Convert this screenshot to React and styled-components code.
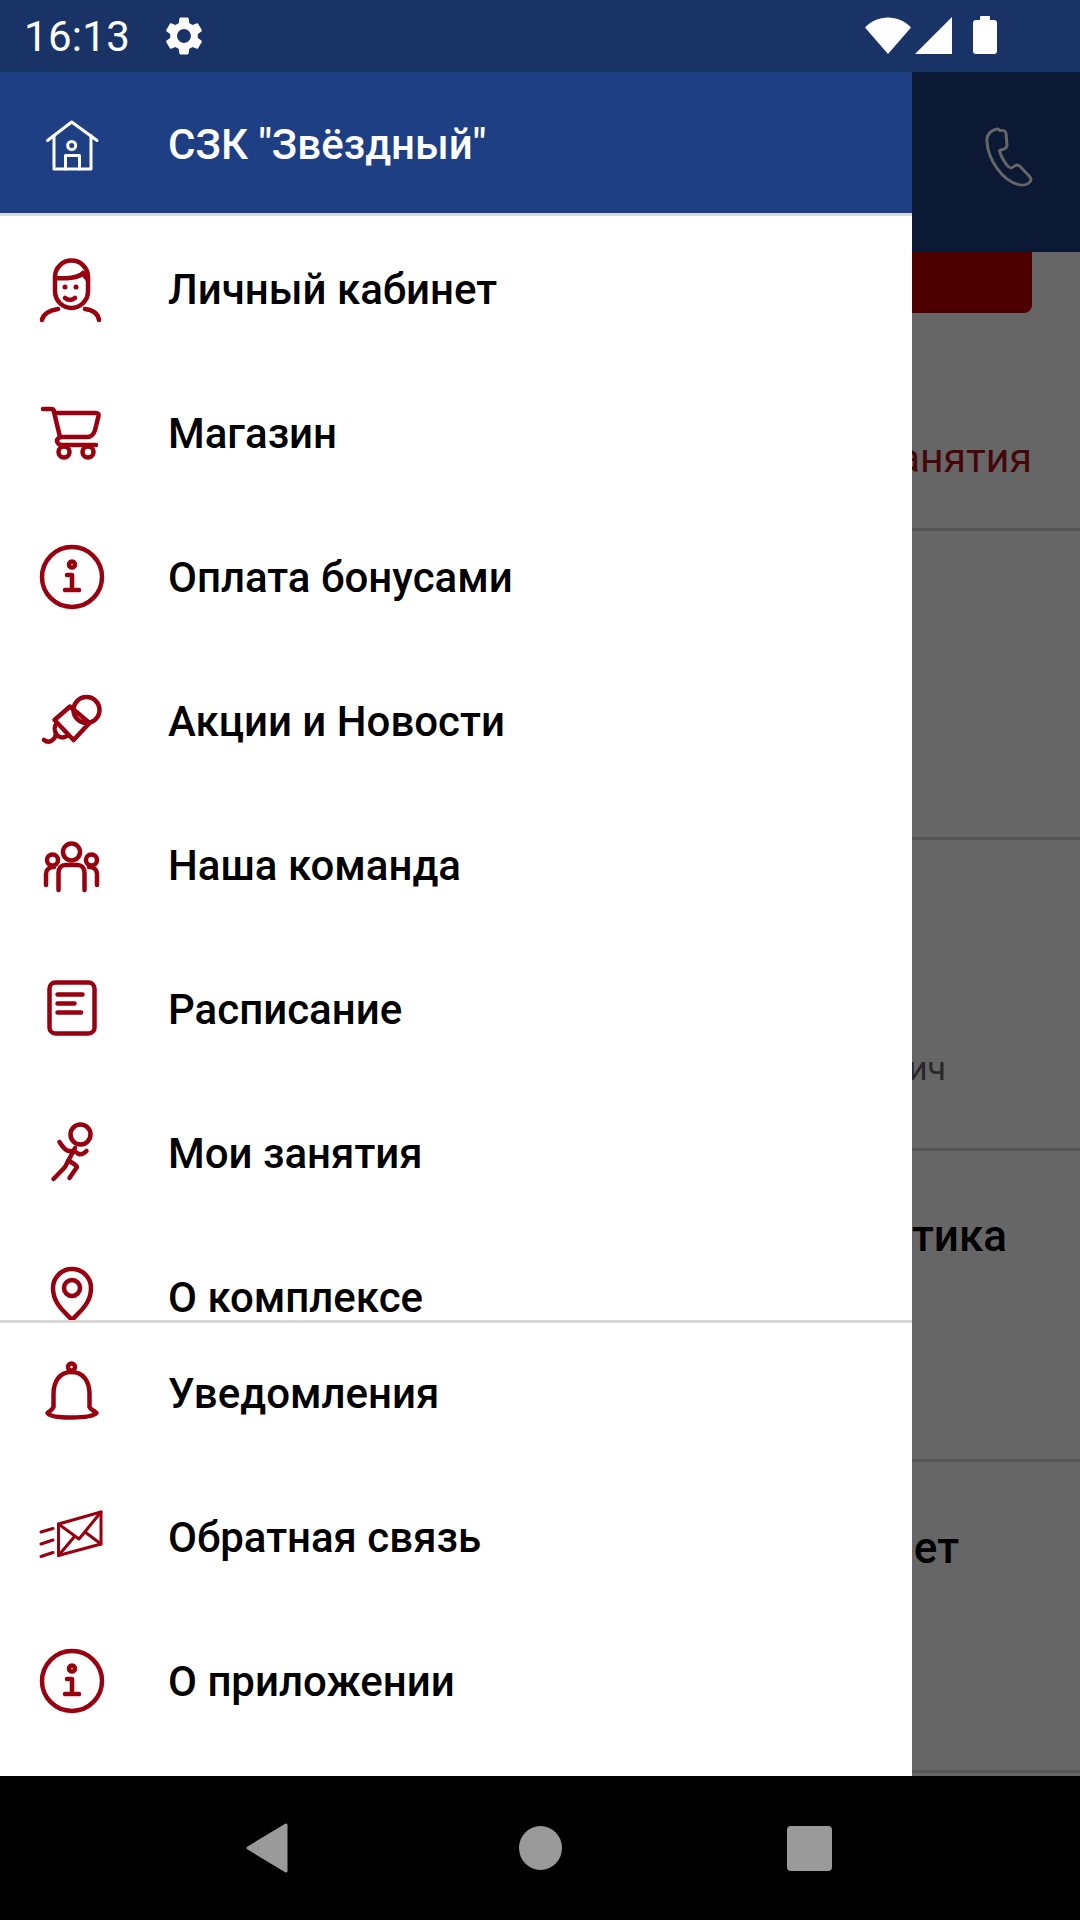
import styled, { createGlobalStyle } from "styled-components";
import { MdSettings } from "react-icons/md";

const GlobalStyle = createGlobalStyle`
	html, body {
		margin: 0;
		padding: 0;
		background: #000000;
	}
	* {
		box-sizing: border-box;
	}
	body {
		font-family: "Roboto", "Liberation Sans", sans-serif;
	}
`;

const PersonIcon = () => (
	<Icon viewBox="0 0 72 72">
		<path d="M19 34V24a16.500 16.500 0 0 1 33 0V38c0 10-8 17-16.500 17S19 48 19 38Z" />
		<path d="M19 25c10 1 24 0 28-5 1 3 3 5 5 7" />
		<path d="M22 56c-8 1-15 5-16 11M49 56c8 1 13 5 14 11" />
		<path d="M29 45c3 2.500 7 2.500 10 0" />
		<Dot cx="29" cy="34" r="2.500" />
		<Dot cx="40" cy="34" r="2.500" />
	</Icon>
);

const CartIcon = () => (
	<Icon viewBox="0 0 72 72">
		<path d="M7 12h8c2 0 3 1 3 3l6 25" />
		<path d="M19 16h41c2 0 3 1 2.500 3L59 33c-1 4-4 7-8 7H26c-3 0-5 2-5 4s2 4 5 4h34" />
		<circle cx="28" cy="55" r="5.500" />
		<circle cx="52" cy="55" r="5.500" />
	</Icon>
);

const InfoIcon = () => (
	<Icon viewBox="0 0 72 72">
		<circle cx="36" cy="36" r="30" />
		<circle cx="36" cy="23.500" r="3" />
		<path d="M31 34h5v15M29 49h14" />
	</Icon>
);

const MicIcon = () => (
	<Icon viewBox="0 0 72 72">
		<circle cx="50.500" cy="25" r="13" />
		<path d="M34 21.500 18.500 35 37.500 55 53.500 38Z" />
		<path d="M21 38c-3 3-3 8 0 12 3 3 7 3 10 1" />
		<path d="M20 49c-1 6-7 10-12 6" />
	</Icon>
);

const TeamIcon = () => (
	<Icon viewBox="0 0 72 72">
		<circle cx="35.500" cy="23" r="8.500" />
		<circle cx="16.500" cy="31" r="5.500" />
		<circle cx="55.500" cy="31" r="5.500" />
		<path d="M22.500 61V44c0-5 3-8 7-8h12c4 0 7 3 7 8v17" />
		<path d="M10 56V45c0-4 3-7 8-7M61 56V45c0-4-3-7-8-7" />
	</Icon>
);

const ScheduleIcon = () => (
	<Icon viewBox="0 0 72 72">
		<rect x="13.500" y="9.500" width="45" height="51" rx="6" />
		<path d="M21.500 21.500h25M21.500 30.500h17M21.500 39.500h23.500" />
	</Icon>
);

const RunnerIcon = () => (
	<Icon viewBox="0 0 72 72">
		<circle cx="44.500" cy="17.500" r="10" />
		<path d="M39 31 29 50 17.500 62" />
		<path d="M23.500 25c3 5 6 9 10 9 3 0 6 0 9 3 3 1 6-1 8-3" />
		<path d="M32 44c3 1 7 3 9 6L33.500 61" />
	</Icon>
);

const PinIcon = () => (
	<Icon viewBox="0 0 72 72">
		<path d="M36 59C29 51 17 43 17 27a19 19 0 0 1 38 0C55 43 43 51 36 59Z" />
		<circle cx="36" cy="27" r="8" />
	</Icon>
);

const BellIcon = () => (
	<Icon viewBox="0 0 72 72">
		<circle cx="35.500" cy="10" r="3.500" />
		<path d="M35.500 15C24 15 17.500 24 17.500 37v13c-1 3-4 4-6 6 2 3 12 4.500 24 4.500s22-1.500 25-4.500c-2-2-6-3-7-6V37C53.500 24 47 15 35.500 15Z" />
	</Icon>
);

const MailIcon = () => (
	<Icon viewBox="0 0 72 72" $thin>
		<path d="M22.500 23 65 11V43L22.500 54.500Z" />
		<path d="M22.500 23 43 38 65 11M22.500 54.500 39 35M65 43 49 31" />
		<path d="M5 31 17 27.500M5 43 17 39M5 55.500 17 51.500" />
	</Icon>
);

const HouseIcon = () => (
	<HeaderIcon viewBox="0 0 72 72">
		<path d="M11.500 33.500 35.700 15 61 33.500" />
		<path d="M18 28.500V62H55V28.500" />
		<path d="M29.500 62V48.500H43.500V62" />
		<circle cx="35.700" cy="38.500" r="4" />
	</HeaderIcon>
);

const topItems = [
	{ label: "Личный кабинет", icon: <PersonIcon /> },
	{ label: "Магазин", icon: <CartIcon /> },
	{ label: "Оплата бонусами", icon: <InfoIcon /> },
	{ label: "Акции и Новости", icon: <MicIcon /> },
	{ label: "Наша команда", icon: <TeamIcon /> },
	{ label: "Расписание", icon: <ScheduleIcon /> },
	{ label: "Мои занятия", icon: <RunnerIcon /> },
	{ label: "О комплексе", icon: <PinIcon /> },
];

const bottomItems = [
	{ label: "Уведомления", icon: <BellIcon /> },
	{ label: "Обратная связь", icon: <MailIcon /> },
	{ label: "О приложении", icon: <InfoIcon /> },
];

const backRows = [
	{ id: "empty", height: 309 },
	{ id: "coach", height: 311, text: "Иванович", size: 34, right: 134, color: "#666666", top: 203 },
	{ id: "sport", height: 311, text: "Гимнастика", size: 44, right: 73, color: "#000000", top: 60 },
	{ id: "room", height: 311, text: "Кабинет", size: 44, right: 121, color: "#000000", top: 61 },
	{ id: "end", height: 311 },
];

export default function App() {
	return (
		<Screen>
			<GlobalStyle />
			<StatusBar>
				<Clock>16:13</Clock>
				<SettingsIcon />
				<StatusIcons>
					<svg width="46" height="37" viewBox="0 0 46 37">
						<path d="M0 10.500C12-3 34-3 46 10.500L23 37Z" fill="#ffffff" />
					</svg>
					<svg width="37" height="37" viewBox="0 0 37 37">
						<path d="M0 37 37 0V37Z" fill="#ffffff" />
					</svg>
					<Battery />
				</StatusIcons>
			</StatusBar>
			<Main>
				<BackPage>
					<BackHeader>
						<svg width="48" height="60" viewBox="0 0 48 64" preserveAspectRatio="none" fill="none" stroke="#ffffff" strokeWidth="3">
							<path d="M13 2C6 3 1 8 2 16 3 33 17 60 37 62c5 0 9-3 9-6 0-2-1-3-3-5l-8-9c-2-2-4-2-6 0-2 2-4 2-6 0-3-4-7-11-8-15-1-2 0-3 3-3 3-1 4-2 4-5l-1-12c0-3-3-4-6-3Z" />
						</svg>
					</BackHeader>
					<RedButton />
					<TabRow>занятия</TabRow>
					{backRows.map((row) => (
						<BackRow key={row.id} $height={row.height}>
							{row.text && (
								<BackText $size={row.size} $right={row.right} $color={row.color} $top={row.top}>
									{row.text}
								</BackText>
							)}
						</BackRow>
					))}
				</BackPage>
				<Scrim />
				<Drawer>
					<DrawerHeader>
						<IconSlot>
							<HouseIcon />
						</IconSlot>
						<HeaderTitle>СЗК "Звёздный"</HeaderTitle>
					</DrawerHeader>
					<TopList>
						{topItems.map((item) => (
							<MenuRow key={item.label}>
								<IconSlot>{item.icon}</IconSlot>
								<MenuLabel>{item.label}</MenuLabel>
							</MenuRow>
						))}
					</TopList>
					<BottomList>
						{bottomItems.map((item) => (
							<MenuRow key={item.label}>
								<IconSlot>{item.icon}</IconSlot>
								<MenuLabel>{item.label}</MenuLabel>
							</MenuRow>
						))}
					</BottomList>
				</Drawer>
			</Main>
			<NavBar>
				<svg width="42" height="50" viewBox="0 0 42 50">
					<path d="M40 2 2 25 40 48Z" fill="#9a9a9a" stroke="#9a9a9a" strokeWidth="3" strokeLinejoin="round" />
				</svg>
				<HomeDot />
				<RecentSquare />
			</NavBar>
		</Screen>
	);
}

const Screen = styled.div`
	display: flex;
	flex-direction: column;
	width: 1080px;
	height: 1920px;
	overflow: hidden;
`;

const StatusBar = styled.div`
	display: flex;
	align-items: center;
	height: 72px;
	padding: 0 83px 0 24px;
	background: #1a3367;
	color: #ffffff;
`;

const Clock = styled.div`
	font-size: 42px;
	letter-spacing: 0.3px;
	font-weight: 400;
`;

const SettingsIcon = styled(MdSettings)`
	font-size: 46px;
	margin-left: 31px;
	color: #ffffff;
`;

const StatusIcons = styled.div`
	display: flex;
	align-items: center;
	gap: 4px;
	margin: 0 0 2px auto;
`;

const Battery = styled.div`
	position: relative;
	width: 24px;
	height: 34px;
	margin: 3px 0 0 17px;
	background: #ffffff;
	border-radius: 3px;

	&::before {
		content: "";
		position: absolute;
		top: -4px;
		left: 7px;
		width: 10px;
		height: 5px;
		background: #ffffff;
		border-radius: 1px;
	}
`;

const Main = styled.div`
	position: relative;
	height: 1704px;
	overflow: hidden;
`;

const BackPage = styled.div`
	display: flex;
	flex-direction: column;
	height: 100%;
	background: #ffffff;
`;

const BackHeader = styled.div`
	display: flex;
	justify-content: flex-end;
	align-items: center;
	height: 180px;
	padding: 0 47px 10px 0;
	background: #1f4085;
	flex-shrink: 0;
`;

const RedButton = styled.div`
	height: 61px;
	margin-right: 48px;
	background: #c00000;
	border-radius: 0 0 8px 0;
	flex-shrink: 0;
`;

const TabRow = styled.div`
	display: flex;
	justify-content: flex-end;
	height: 218px;
	padding: 120px 48px 0 0;
	border-bottom: 3px solid #d5d5d5;
	color: #b01018;
	font-size: 41px;
	line-height: 50px;
	flex-shrink: 0;
`;

const BackRow = styled.div`
	display: flex;
	justify-content: flex-end;
	height: ${(props) => props.$height}px;
	border-bottom: 3px solid #d5d5d5;
	flex-shrink: 0;
`;

const BackText = styled.div`
	margin: ${(props) => props.$top}px ${(props) => props.$right}px 0 0;
	font-size: ${(props) => props.$size}px;
	line-height: 50px;
	font-weight: ${(props) => (props.$size > 40 ? 500 : 400)};
	color: ${(props) => props.$color};
`;

const Scrim = styled.div`
	position: absolute;
	inset: 0;
	background: rgba(0, 0, 0, 0.6);
`;

const Drawer = styled.div`
	position: absolute;
	top: 0;
	left: 0;
	bottom: 0;
	display: flex;
	flex-direction: column;
	width: 912px;
	background: #ffffff;
`;

const DrawerHeader = styled.div`
	display: flex;
	align-items: center;
	height: 144px;
	padding-left: 36px;
	background: #1e3f84;
	border-bottom: 3px solid #d8d8d8;
	flex-shrink: 0;
`;

const HeaderTitle = styled.div`
	margin-left: 60px;
	padding-top: 4px;
	color: #ffffff;
	font-size: 42px;
	font-weight: 500;
`;

const TopList = styled.div`
	height: 1104px;
	padding-top: 1px;
	overflow: hidden;
	flex-shrink: 0;
`;

const BottomList = styled.div`
	border-top: 3px solid #d8d8d8;

	& > :first-child {
		margin-top: -2px;
	}
`;

const MenuRow = styled.div`
	display: flex;
	align-items: center;
	height: 144px;
	padding-left: 36px;
`;

const IconSlot = styled.div`
	display: flex;
	width: 72px;
	height: 72px;
	flex-shrink: 0;
`;

const MenuLabel = styled.div`
	margin-left: 60px;
	color: #000000;
	font-size: 42px;
	font-weight: 500;
`;

const Icon = styled.svg`
	width: 72px;
	height: 72px;
	fill: none;
	stroke: #98000f;
	stroke-width: ${(props) => (props.$thin ? 3 : 4.5)};
	stroke-linecap: round;
	stroke-linejoin: round;
`;

const HeaderIcon = styled(Icon)`
	stroke: #ffffff;
	stroke-width: 3;
`;

const Dot = styled.circle`
	fill: #98000f;
	stroke: none;
`;

const NavBar = styled.div`
	display: flex;
	align-items: center;
	justify-content: space-between;
	height: 144px;
	padding: 0 248px 0 246px;
	background: #000000;
`;

const HomeDot = styled.div`
	width: 43px;
	height: 44px;
	margin-left: 5px;
	border-radius: 50%;
	background: #9a9a9a;
`;

const RecentSquare = styled.div`
	width: 45px;
	height: 45px;
	border-radius: 4px;
	background: #9a9a9a;
`;
